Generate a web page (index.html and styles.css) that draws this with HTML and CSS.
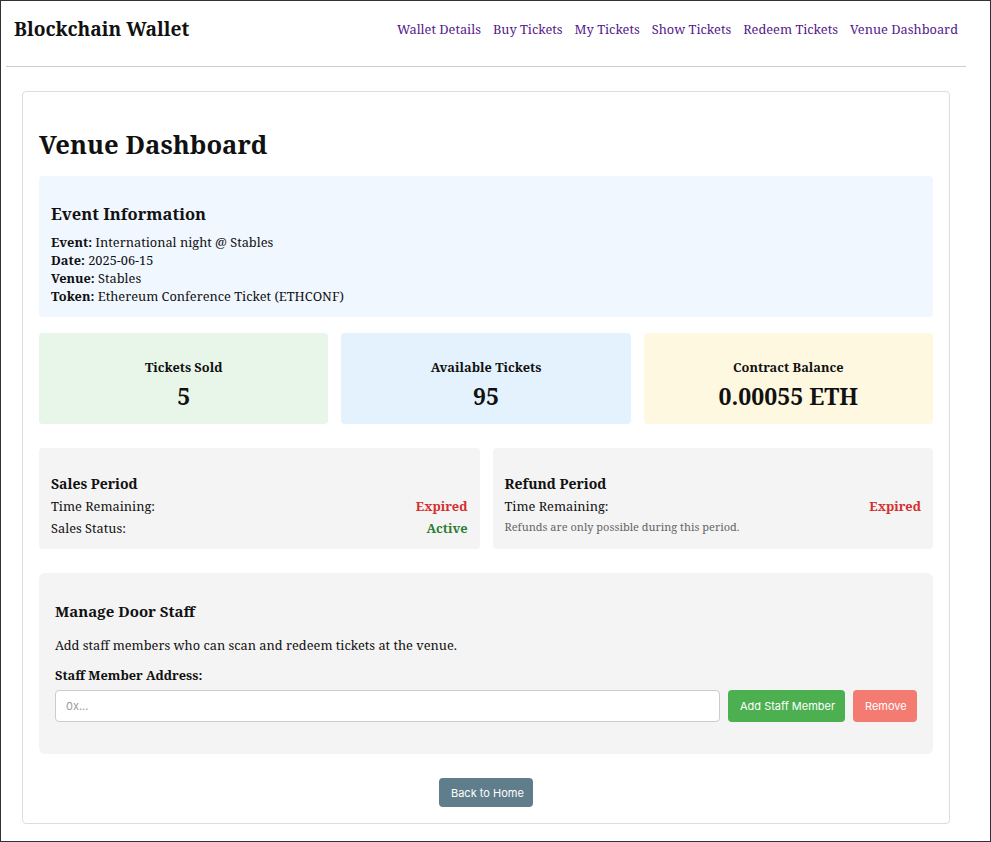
FILE: index.html
```html
<!DOCTYPE html>
<html>
<head>
<meta charset="utf-8">
<title>Venue Dashboard</title>
<link rel="stylesheet" href="styles.css">
</head>
<body>
<div class="frame">
  <header class="topbar">
    <div class="brand">Blockchain Wallet</div>
    <nav class="nav">
      <a href="#">Wallet Details</a>
      <a href="#">Buy Tickets</a>
      <a href="#">My Tickets</a>
      <a href="#">Show Tickets</a>
      <a href="#">Redeem Tickets</a>
      <a href="#">Venue Dashboard</a>
    </nav>
  </header>
  <main class="card">
    <h1 class="title">Venue Dashboard</h1>
    <section class="event-info">
      <h2 class="section-title">Event Information</h2>
      <div class="line"><b>Event:</b> International night @ Stables</div>
      <div class="line"><b>Date:</b> 2025-06-15</div>
      <div class="line"><b>Venue:</b> Stables</div>
      <div class="line"><b>Token:</b> Ethereum Conference Ticket (ETHCONF)</div>
    </section>
    <section class="stats">
      <div class="stat stat-green">
        <div class="stat-label">Tickets Sold</div>
        <div class="stat-value">5</div>
      </div>
      <div class="stat stat-blue">
        <div class="stat-label">Available Tickets</div>
        <div class="stat-value">95</div>
      </div>
      <div class="stat stat-yellow">
        <div class="stat-label">Contract Balance</div>
        <div class="stat-value">0.00055 ETH</div>
      </div>
    </section>
    <section class="periods">
      <div class="period">
        <h3 class="period-title">Sales Period</h3>
        <div class="row"><span>Time Remaining:</span><span class="expired">Expired</span></div>
        <div class="row"><span>Sales Status:</span><span class="active">Active</span></div>
      </div>
      <div class="period">
        <h3 class="period-title">Refund Period</h3>
        <div class="row"><span>Time Remaining:</span><span class="expired">Expired</span></div>
        <div class="note">Refunds are only possible during this period.</div>
      </div>
    </section>
    <section class="staff">
      <h3 class="staff-title">Manage Door Staff</h3>
      <p class="staff-desc">Add staff members who can scan and redeem tickets at the venue.</p>
      <label class="staff-label">Staff Member Address:</label>
      <div class="staff-form">
        <input class="staff-input" type="text" placeholder="0x...">
        <button class="btn btn-add">Add Staff Member</button>
        <button class="btn btn-remove">Remove</button>
      </div>
    </section>
    <div class="back-wrap">
      <button class="btn btn-back">Back to Home</button>
    </div>
  </main>
</div>
</body>
</html>
```

FILE: styles.css
```css
html, body {
  margin: 0;
  padding: 0;
  background: #fff;
}
body {
  font-family: "Noto Serif", "DejaVu Serif", serif;
  color: #111;
  font-size: 12.8px;
}
.frame {
  box-sizing: border-box;
  width: 991px;
  height: 842px;
  border: 1px solid #333;
  overflow: hidden;
}
.topbar {
  width: 960px;
  margin-left: 5px;
  height: 66px;
  border-bottom: 1px solid #ccc;
  display: flex;
  justify-content: space-between;
  align-items: flex-start;
  box-sizing: border-box;
  padding: 14px 8px 0 8px;
}
.brand {
  font-size: 19.2px;
  font-weight: bold;
  line-height: 28px;
}
.nav {
  display: flex;
  gap: 12px;
  padding-top: 4px;
}
.nav a {
  color: #551a8b;
  text-decoration: none;
  font-size: 12.8px;
  line-height: 20px;
}
.card {
  margin: 24px 0 0 21px;
  width: 928px;
  height: 733px;
  box-sizing: border-box;
  border: 1px solid #ddd;
  border-radius: 4px;
  padding: 15px 16px 16px;
}
.title {
  margin: 20px 0 13px;
  font-size: 25.6px;
  line-height: 36px;
  font-weight: bold;
}
.event-info {
  background: #f0f7ff;
  border-radius: 4px;
  padding: 12px 12px 12px;
  height: 141px;
  box-sizing: border-box;
}
.section-title {
  margin: 15px 0 8px;
  font-size: 16.5px;
  line-height: 22px;
}
.line {
  line-height: 18px;
}
.stats {
  display: grid;
  grid-template-columns: 1fr 1fr 1fr;
  gap: 13px;
  margin-top: 16px;
}
.stat {
  height: 91px;
  border-radius: 4px;
  display: flex;
  flex-direction: column;
  align-items: center;
  justify-content: center;
  padding-top: 12px;
  box-sizing: border-box;
}
.stat-green { background: #e8f5e9; }
.stat-blue { background: #e3f2fd; }
.stat-yellow { background: #fff8e1; }
.stat-label {
  font-weight: bold;
  font-size: 12.8px;
  line-height: 18px;
  margin-bottom: 4px;
}
.stat-value {
  font-weight: bold;
  font-size: 23px;
  line-height: 32px;
}
.periods {
  display: grid;
  grid-template-columns: 1fr 1fr;
  gap: 13px;
  margin-top: 24px;
}
.period {
  background: #f4f4f4;
  border-radius: 4px;
  height: 101px;
  box-sizing: border-box;
  padding: 25px 12px 0;
}
.period-title {
  margin: 0;
  font-size: 14px;
  line-height: 22px;
}
.row {
  display: flex;
  justify-content: space-between;
  line-height: 22px;
}
.expired { color: #d32f2f; font-weight: bold; }
.active { color: #2e7d32; font-weight: bold; }
.note {
  font-size: 11px;
  color: #666;
  line-height: 20px;
}
.staff {
  margin-top: 24px;
  background: #f4f4f4;
  border-radius: 6px;
  height: 181px;
  box-sizing: border-box;
  padding: 27px 16px 0;
}
.staff-title {
  margin: 0;
  font-size: 15px;
  line-height: 22px;
}
.staff-desc {
  margin: 13px 0 10px;
  line-height: 20px;
}
.staff-label {
  display: block;
  font-weight: bold;
  line-height: 20px;
  margin-bottom: 5px;
}
.staff-form {
  display: flex;
  gap: 8px;
}
.staff-input {
  flex: 1;
  height: 32px;
  box-sizing: border-box;
  border: 1px solid #ccc;
  border-radius: 4px;
  padding: 0 10px;
  font-family: Inter, "Noto Sans", sans-serif;
  font-size: 11px;
  background: #fff;
}
.staff-input::placeholder { color: #999; }
.btn {
  font-family: Inter, "Noto Sans", sans-serif;
  font-size: 11px;
  color: #fff;
  border: none;
  border-radius: 4px;
  padding: 0 12px;
  height: 32px;
  white-space: nowrap;
  cursor: pointer;
}
.btn-add { background: #4caf50; width: 117px; }
.btn-remove { background: #f47b72; width: 64px; }
.back-wrap {
  display: flex;
  justify-content: center;
  margin-top: 24px;
}
.btn-back {
  background: #607d8b;
  height: 29px;
  width: 94px;
}
```
